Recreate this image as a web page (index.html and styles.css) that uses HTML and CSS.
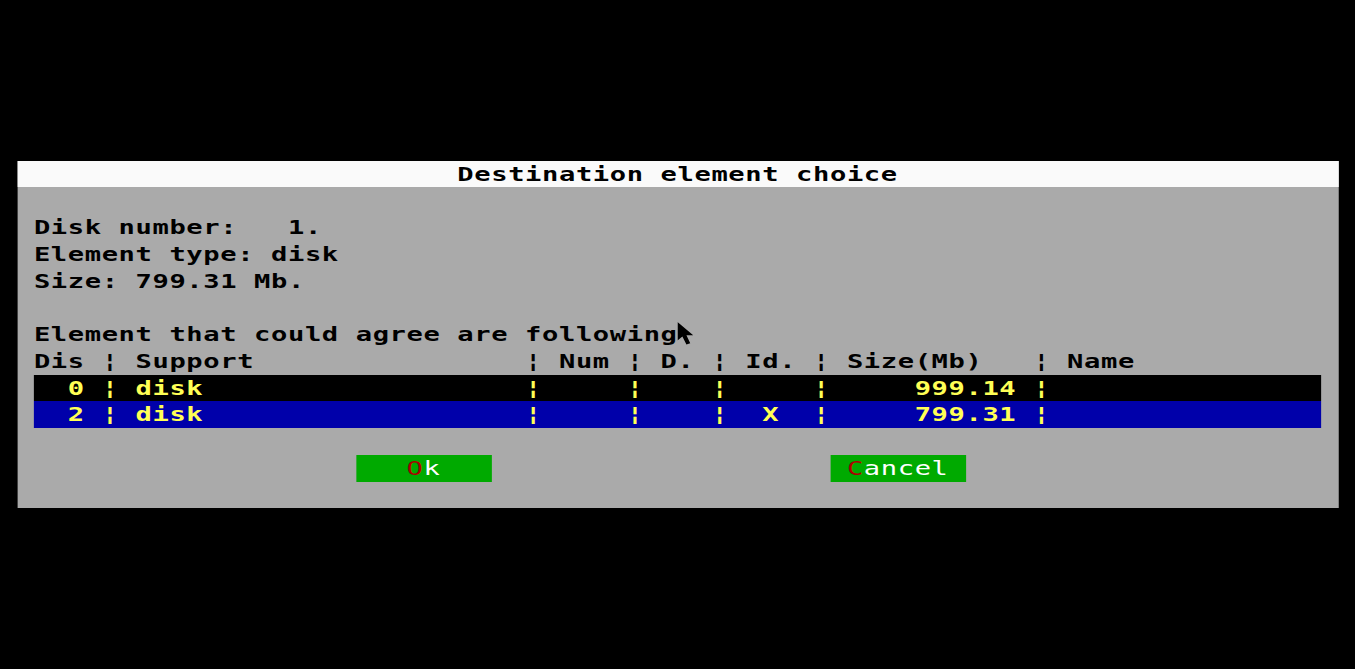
FILE: index.html
```html
<!DOCTYPE html>
<html lang="en">
<head>
<meta charset="utf-8">
<title>Destination element choice</title>
<link rel="stylesheet" href="styles.css">
</head>
<body>
<div class="screen">
  <div class="dialog">
    <div class="row title">Destination element choice</div>
    <div class="row"></div>
    <div class="row text">Disk number:   1.</div>
    <div class="row text">Element type: disk</div>
    <div class="row text">Size: 799.31 Mb.</div>
    <div class="row"></div>
    <div class="row text cursor-row">Element that could agree are following<svg class="cursor" viewBox="0 0 12 20" preserveAspectRatio="none"><path d="M0 0 L0 16 L3.6 12.6 L6.6 19.6 L9.4 18.4 L6.6 11.6 L11.6 11.6 Z" fill="#000"/></svg></div>
    <div class="row text">Dis ¦ Support                ¦ Num ¦ D. ¦ Id. ¦ Size(Mb)   ¦ Name</div>
    <div class="row item item-black">  0 ¦ disk                   ¦     ¦    ¦     ¦     999.14 ¦</div>
    <div class="row item item-blue">  2 ¦ disk                   ¦     ¦    ¦  X  ¦     799.31 ¦</div>
    <div class="row"></div>
    <div class="row buttons">
      <div class="btn">   <span class="hot">O</span>k   </div>
      <div class="btn"> <span class="hot">C</span>ancel </div>
    </div>
    <div class="row"></div>
  </div>
</div>
</body>
</html>
```

FILE: styles.css
```css
:root {
  --cw: 12.5px;
  --rh: 26.76px;
}

html, body {
  margin: 0;
  padding: 0;
  background: #000;
  overflow: hidden;
}

.screen {
  width: calc(var(--cw) * 80);
  height: 669px;
  box-sizing: border-box;
  padding-top: calc(var(--rh) * 6);
  padding-left: var(--cw);
  transform: scaleX(1.355);
  transform-origin: 0 0;
  font-family: "DejaVu Sans Mono", "Liberation Mono", monospace;
  font-weight: bold;
  font-size: 20px;
  letter-spacing: 0.459px;
  color: #000;
}

.dialog {
  width: calc(var(--cw) * 78);
  background: #aaaaaa;
  display: flex;
  flex-direction: column;
}

.row {
  height: var(--rh);
  line-height: var(--rh);
  white-space: pre;
  overflow: hidden;
}

.title {
  background: #fafafa;
  padding-left: calc(var(--cw) * 26);
}

.text {
  padding-left: var(--cw);
}

.cursor-row {
  position: relative;
  overflow: visible;
}

.cursor {
  position: absolute;
  left: calc(var(--cw) * 39);
  top: 1px;
  width: 12px;
  height: 23px;
}

.item {
  margin-left: var(--cw);
  width: calc(var(--cw) * 76);
  color: #ffff55;
}

.item-black {
  background: #000;
}

.item-blue {
  background: #0000aa;
}

.buttons {
  display: flex;
  padding-left: calc(var(--cw) * 20);
  gap: calc(var(--cw) * 20);
}

.btn {
  width: calc(var(--cw) * 8);
  background: #00aa00;
  color: #ffffff;
  font-weight: normal;
}

.hot {
  color: #aa0000;
}
```
